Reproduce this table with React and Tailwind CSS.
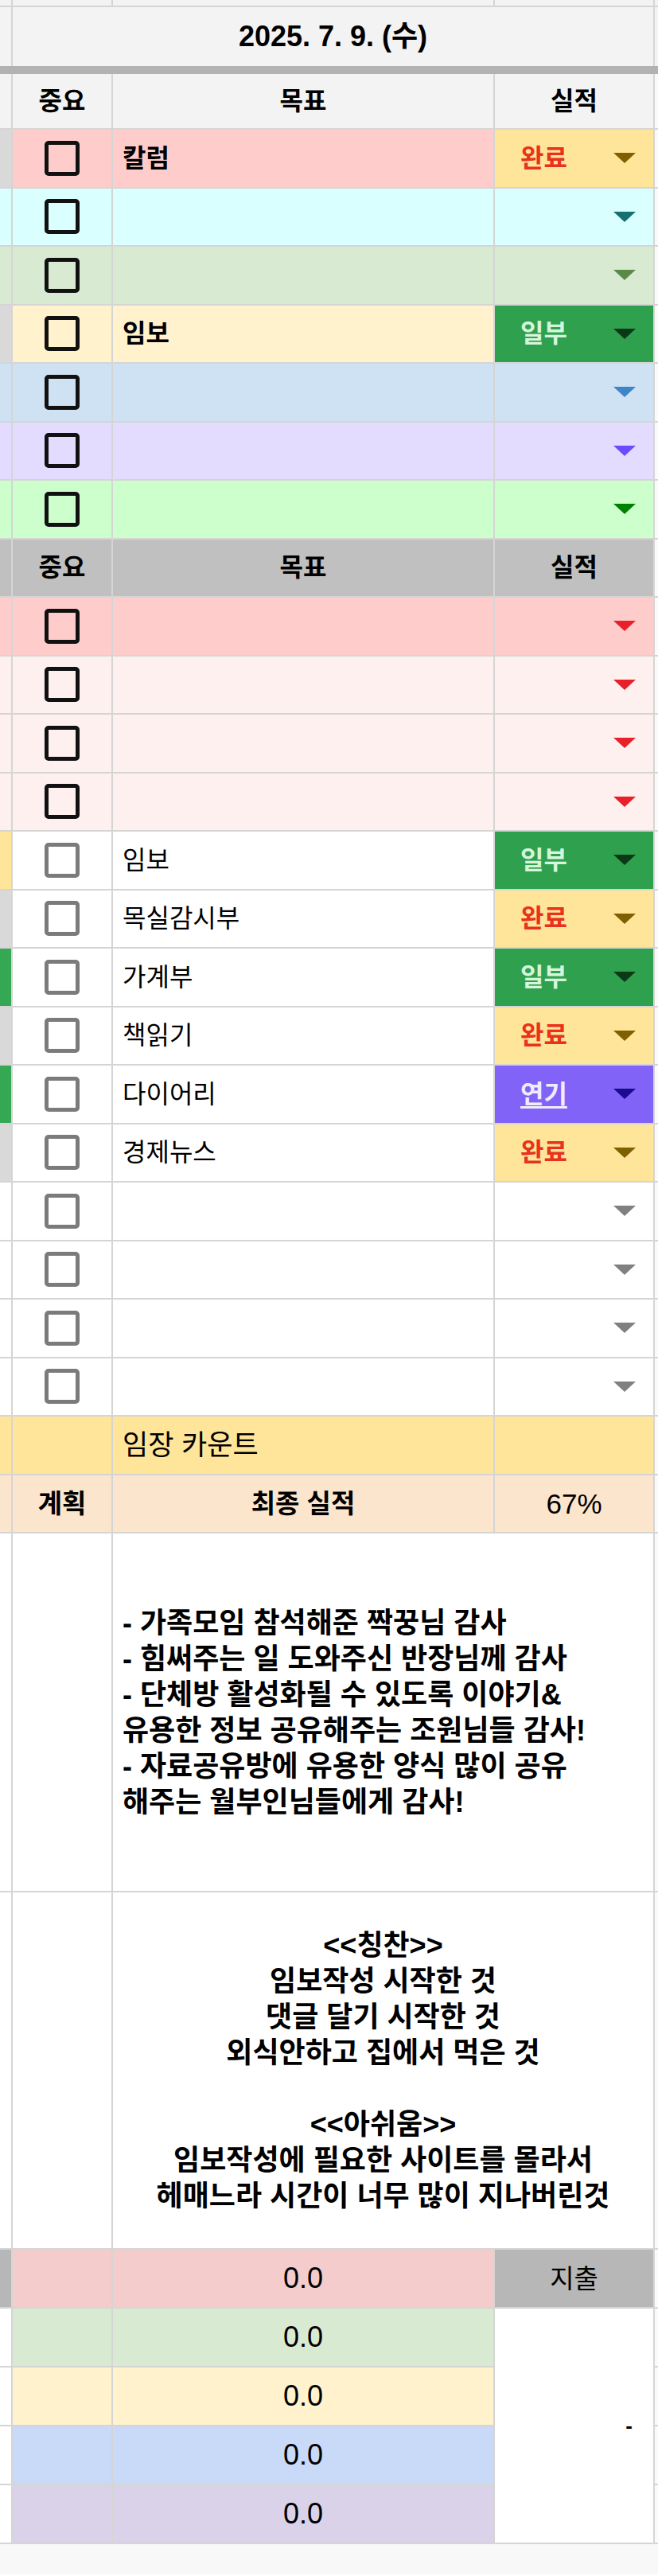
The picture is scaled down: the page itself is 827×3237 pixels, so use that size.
import React from 'react';

const cols = 'grid grid-cols-[14px_124px_478px_199px_4px] gap-x-[2px]';

const topRows = [
  { strip: 'bg-[#d9d9d9]', bg: 'bg-[#ffcccc]', text: '칼럼', status: 'done' },
  { strip: 'bg-[#d9ffff]', bg: 'bg-[#d9ffff]', text: '', arrow: '#15706f' },
  { strip: 'bg-[#d9ead3]', bg: 'bg-[#d9ead3]', text: '', arrow: '#5b8a48' },
  { strip: 'bg-[#d9d9d9]', bg: 'bg-[#fff2cc]', text: '임보', status: 'part' },
  { strip: 'bg-[#cfe2f3]', bg: 'bg-[#cfe2f3]', text: '', arrow: '#3d85c6' },
  { strip: 'bg-[#e3dcff]', bg: 'bg-[#e3dcff]', text: '', arrow: '#6a4cff' },
  { strip: 'bg-[#ccffcc]', bg: 'bg-[#ccffcc]', text: '', arrow: '#008000' },
];

const pinkRows = [
  { strip: 'bg-[#ffcccc]', bg: 'bg-[#ffcccc]', text: '', arrow: '#e8202a' },
  { strip: 'bg-[#fff0f0]', bg: 'bg-[#fff0f0]', text: '', arrow: '#e8202a' },
  { strip: 'bg-[#fff0f0]', bg: 'bg-[#fff0f0]', text: '', arrow: '#e8202a' },
  { strip: 'bg-[#fff0f0]', bg: 'bg-[#fff0f0]', text: '', arrow: '#e8202a' },
];

const dailyRows = [
  { strip: 'bg-[#ffe599]', text: '임보', status: 'part' },
  { strip: 'bg-[#d9d9d9]', text: '목실감시부', status: 'done' },
  { strip: 'bg-[#34a853]', text: '가계부', status: 'part' },
  { strip: 'bg-[#d9d9d9]', text: '책읽기', status: 'done' },
  { strip: 'bg-[#34a853]', text: '다이어리', status: 'delay' },
  { strip: 'bg-[#d9d9d9]', text: '경제뉴스', status: 'done' },
  { strip: 'bg-white', text: '' },
  { strip: 'bg-white', text: '' },
  { strip: 'bg-white', text: '' },
  { strip: 'bg-white', text: '' },
];

const money = [
  { bg: 'bg-[#f4cccc]', strip: 'bg-[#b7b7b7]' },
  { bg: 'bg-[#d9ead3]', strip: 'bg-white' },
  { bg: 'bg-[#fff2cc]', strip: 'bg-white' },
  { bg: 'bg-[#c9daf8]', strip: 'bg-white' },
  { bg: 'bg-[#d9d2e9]', strip: 'bg-white' },
];

const Arrow = ({ color }) => (
  <svg width="28" height="13" viewBox="0 0 28 13">
    <polygon points="0,0 28,0 14,13" fill={color} />
  </svg>
);

const Box = ({ dark }) => (
  <div
    className={`w-[44px] h-[44px] rounded-[5px] border-[5px] ${
      dark ? 'border-[#111]' : 'border-[#7b7b7b] bg-white'
    }`}
  />
);

function Status({ status, bg, arrow }) {
  if (status === 'done') {
    return (
      <div className="bg-[#ffe599] flex items-center justify-between pl-[32px] pr-[22px]">
        <span className="text-[32px] font-bold text-[#e8321e]">완료</span>
        <Arrow color="#7f6000" />
      </div>
    );
  }
  if (status === 'part') {
    return (
      <div className="bg-[#2fa04e] flex items-center justify-between pl-[32px] pr-[22px]">
        <span className="text-[32px] font-bold text-[#d6f6dc]">일부</span>
        <Arrow color="#0c3816" />
      </div>
    );
  }
  if (status === 'delay') {
    return (
      <div className="bg-[#8163f7] flex items-center justify-between pl-[32px] pr-[22px]">
        <span className="text-[32px] font-bold text-[#f0ecff] underline underline-offset-4">연기</span>
        <Arrow color="#1c0a8f" />
      </div>
    );
  }
  return (
    <div className={`${bg} flex items-center justify-end pr-[22px]`}>
      <Arrow color={arrow} />
    </div>
  );
}

function TaskRow({ r, dark, bold, bg }) {
  const cellBg = r.bg || bg;
  return (
    <div className={`${cols} h-[71.5px]`}>
      <div className={r.strip} />
      <div className={`${cellBg} flex items-center justify-center`}>
        <Box dark={dark} />
      </div>
      <div className={`${cellBg} flex items-center pl-[12px] text-[32px] ${bold ? 'font-bold' : ''}`}>
        {r.text}
      </div>
      <Status status={r.status} bg={cellBg} arrow={r.arrow || '#808080'} />
      <div className="bg-[#fafafa]" />
    </div>
  );
}

function HeaderRow({ bg, h }) {
  return (
    <div className={`${cols} ${h} text-[32px] font-bold`}>
      <div className={bg} />
      <div className={`${bg} flex items-center justify-center`}>중요</div>
      <div className={`${bg} flex items-center justify-center`}>목표</div>
      <div className={`${bg} flex items-center justify-center`}>실적</div>
      <div className="bg-[#fafafa]" />
    </div>
  );
}

export default function App() {
  return (
    <div className="w-[827px] bg-white text-black font-['Liberation_Sans','Noto_Sans_CJK_KR',sans-serif] leading-none">
      {/* date block */}
      <div className="flex flex-col gap-y-[2px] bg-[#d5d5d5]">
        <div className={`${cols} h-[7px]`}>
          <div className="bg-[#f3f3f3]" />
          <div className="bg-[#f3f3f3]" />
          <div className="bg-[#f3f3f3]" />
          <div className="bg-[#f3f3f3]" />
          <div className="bg-[#f3f3f3]" />
        </div>
        <div className={`${cols} h-[74px]`}>
          <div className="bg-[#f3f3f3]" />
          <div className="col-span-3 bg-[#f3f3f3] flex items-center justify-center text-[36px] font-bold">
            2025. 7. 9. (수)
          </div>
          <div className="bg-[#f3f3f3]" />
        </div>
      </div>
      <div className="h-[10px] bg-[#b2b2b2]" />

      {/* main table */}
      <div className="flex flex-col gap-y-[2px] bg-[#d5d5d5] pb-[2px]">
        <HeaderRow bg="bg-[#f3f3f3]" h="h-[68px]" />
        {topRows.map((r, i) => (
          <TaskRow key={'t' + i} r={r} dark bold />
        ))}
        <HeaderRow bg="bg-[#c0c0c0]" h="h-[71.5px]" />
        {pinkRows.map((r, i) => (
          <TaskRow key={'p' + i} r={r} dark bold />
        ))}
        {dailyRows.map((r, i) => (
          <TaskRow key={'d' + i} r={r} bg="bg-white" />
        ))}

        <div className={`${cols} h-[71.5px] text-[33px]`}>
          <div className="bg-[#ffe599]" />
          <div className="bg-[#ffe599]" />
          <div className="bg-[#ffe599] flex items-center pl-[12px] text-[35px]">임장 카운트</div>
          <div className="bg-[#ffe599]" />
          <div className="bg-[#fafafa]" />
        </div>

        <div className={`${cols} h-[71.5px] text-[33px]`}>
          <div className="bg-[#fce5cd]" />
          <div className="bg-[#fce5cd] flex items-center justify-center font-bold">계획</div>
          <div className="bg-[#fce5cd] flex items-center justify-center font-bold">최종 실적</div>
          <div className="bg-[#fce5cd] flex items-center justify-center text-[35px]">67%</div>
          <div className="bg-[#fafafa]" />
        </div>

        <div className={`${cols} h-[449px]`}>
          <div className="bg-white" />
          <div className="bg-white" />
          <div className="col-span-2 bg-white flex flex-col justify-center pl-[12px] text-[36px] leading-[45px] font-bold">
            <p>- 가족모임 참석해준 짝꿍님 감사</p>
            <p>- 힘써주는 일 도와주신 반장님께 감사</p>
            <p>- 단체방 활성화될 수 있도록 이야기&amp;</p>
            <p>유용한 정보 공유해주는 조원님들 감사!</p>
            <p>- 자료공유방에 유용한 양식 많이 공유</p>
            <p>해주는 월부인님들에게 감사!</p>
          </div>
          <div className="bg-[#fafafa]" />
        </div>

        <div className={`${cols} h-[447px]`}>
          <div className="bg-white" />
          <div className="bg-white" />
          <div className="col-span-2 bg-white flex flex-col justify-center items-center text-center text-[36px] leading-[45px] font-bold">
            <p>&lt;&lt;칭찬&gt;&gt;</p>
            <p>임보작성 시작한 것</p>
            <p>댓글 달기 시작한 것</p>
            <p>외식안하고 집에서 먹은 것</p>
            <p>&nbsp;</p>
            <p>&lt;&lt;아쉬움&gt;&gt;</p>
            <p>임보작성에 필요한 사이트를 몰라서</p>
            <p>헤매느라 시간이 너무 많이 지나버린것</p>
          </div>
          <div className="bg-[#fafafa]" />
        </div>

        {/* money block */}
        <div className={`${cols} grid-rows-[72px_72px_72px_72px_72px] gap-y-[2px]`}>
          {money.map((m, i) => (
            <React.Fragment key={i}>
              <div className={m.strip} />
              <div className={m.bg} />
              <div className={`${m.bg} flex items-center justify-center text-[36px]`}>0.0</div>
              {i === 0 && (
                <div className="bg-[#b7b7b7] flex items-center justify-center text-[33px]">지출</div>
              )}
              {i === 1 && (
                <div className="row-span-4 bg-white flex items-center justify-end pr-[26px] text-[26px] font-bold">
                  -
                </div>
              )}
              <div className="bg-[#fafafa]" />
            </React.Fragment>
          ))}
        </div>
      </div>
      <div className="h-[38px] bg-[#f8f8f8]" />
    </div>
  );
}
